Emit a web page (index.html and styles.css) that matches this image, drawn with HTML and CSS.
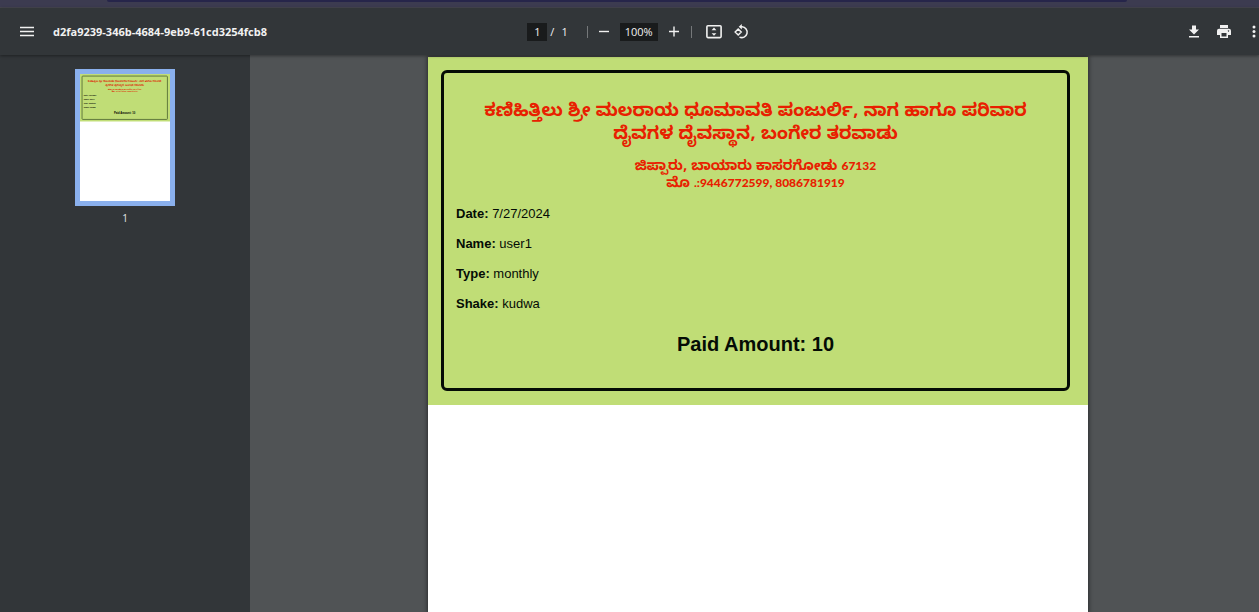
FILE: index.html
```html
<!DOCTYPE html>
<html lang="en">
<head>
<meta charset="utf-8">
<title>d2fa9239-346b-4684-9eb9-61cd3254fcb8</title>
<link rel="stylesheet" href="styles.css">
</head>
<body>
<div class="browser-edge"><div class="address-edge"></div></div>
<header class="toolbar">
  <div class="toolbar-start">
    <button class="icon-button" aria-label="Menu"><svg width="16" height="16" viewBox="0 0 16 16"><path d="M1 3.500h14M1 7.500h14M1 11.500h14" stroke="currentColor" stroke-width="1.600"/></svg></button>
    <span class="file-name">d2fa9239-346b-4684-9eb9-61cd3254fcb8</span>
  </div>
  <div class="toolbar-center">
    <div class="pager"><input class="field page-field" type="text" value="1" aria-label="Page number"><span>/</span><span>1</span></div>
    <span class="divider"></span>
    <div class="zoom">
      <button class="icon-button" aria-label="Zoom out"><svg width="16" height="16" viewBox="0 0 16 16"><path d="M3 7.500h10" stroke="currentColor" stroke-width="1.400"/></svg></button>
      <input class="field zoom-field" type="text" value="100%" aria-label="Zoom level">
      <button class="icon-button" aria-label="Zoom in"><svg width="16" height="16" viewBox="0 0 16 16"><path d="M3 7.500h10M8 2.500v10" stroke="currentColor" stroke-width="1.400"/></svg></button>
    </div>
    <span class="divider"></span>
    <div class="view-tools">
      <button class="icon-button" aria-label="Fit to page"><svg width="16" height="16" viewBox="0 0 16 16"><rect x="0.900" y="1.800" width="14.200" height="11.800" rx="1" fill="none" stroke="currentColor" stroke-width="1.600"/><path d="M8 3.600l2.400 2.600H5.600zM8 11.800l2.400-2.600H5.600z" fill="currentColor"/></svg></button>
      <button class="icon-button" aria-label="Rotate counterclockwise"><svg width="16" height="16" viewBox="0 0 16 16" fill="none" stroke="currentColor" stroke-width="1.500"><path d="M5.200 5l3 3-3 3-3-3zM7 2.800h2a5.400 5.400 0 1 1-2.500 10.300"/><path d="M8.800 0v5.600L5.700 2.800z" fill="currentColor" stroke="none"/></svg></button>
    </div>
  </div>
  <div class="toolbar-end">
    <button class="icon-button" aria-label="Download"><svg width="16" height="16" viewBox="0 0 16 16" fill="currentColor"><path d="M6 1.500h4v4h3l-5 5-5-5h3zM3 12h10v1.500H3z"/></svg></button>
    <button class="icon-button" aria-label="Print"><svg width="16" height="16" viewBox="0 0 16 16" fill="currentColor" fill-rule="evenodd"><path d="M4 1h8v3H4zM3 4.700h10a2 2 0 0 1 2 2v4.300h-3V14H4v-3H1V6.700a2 2 0 0 1 2-2zM5.500 9v3.500h5V9zM12.500 6.200a.7.7 0 1 0 .01 0z"/></svg></button>
    <button class="icon-button more" aria-label="More actions"><svg width="6" height="16" viewBox="0 0 6 16" fill="currentColor"><circle cx="3" cy="3" r="1.500"/><circle cx="3" cy="7.500" r="1.500"/><circle cx="3" cy="12" r="1.500"/></svg></button>
  </div>
</header>
<div class="viewer">
  <aside class="sidebar">
    <button class="thumbnail" aria-label="Page 1">
      <svg width="90" height="127" viewBox="0 0 660 931" font-family="Liberation Sans, sans-serif">
        <rect width="660" height="931" fill="#fff"/>
        <rect width="660" height="348" fill="#c0dd76"/>
        <rect x="15" y="15" width="626" height="318" rx="6" fill="none" stroke="#4c6430" stroke-width="6"/>
        <g fill="#dd2b08" font-family="Noto Sans Kannada, Noto Sans, sans-serif" font-weight="700" text-anchor="middle">
          <text x="327" y="60" font-size="18">ಕಣಿಹಿತ್ತಿಲು ಶ್ರೀ ಮಲರಾಯ ಧೂಮಾವತಿ ಪಂಜುರ್ಲಿ, ನಾಗ ಹಾಗೂ ಪರಿವಾರ</text>
          <text x="327" y="86" font-size="18">ದೈವಗಳ ದೈವಸ್ಥಾನ, ಬಂಗೇರ ತರವಾಡು</text>
          <text x="327" y="116" font-size="14">ಜಿಪ್ಪಾರು, ಬಾಯಾರು ಕಾಸರಗೋಡು 67132</text>
          <text x="327" y="135" font-size="13">ಮೊ .:9446772599, 8086781919</text>
        </g>
        <g font-size="13" font-weight="700">
          <text x="28" y="162">Date: 7/27/2024</text><text x="28" y="192">Name: user1</text><text x="28" y="222">Type: monthly</text><text x="28" y="252">Shake: kudwa</text>
          <text x="327" y="294" font-size="20" text-anchor="middle">Paid Amount: 10</text>
        </g>
      </svg>
    </button>
    <span class="thumbnail-number">1</span>
  </aside>
  <main class="canvas">
    <article class="page">
      <section class="receipt">
        <div class="receipt-frame">
          <h1 class="temple" lang="kn">ಕಣಿಹಿತ್ತಿಲು ಶ್ರೀ ಮಲರಾಯ ಧೂಮಾವತಿ ಪಂಜುರ್ಲಿ, ನಾಗ ಹಾಗೂ ಪರಿವಾರ<br>ದೈವಗಳ ದೈವಸ್ಥಾನ, ಬಂಗೇರ ತರವಾಡು</h1>
          <p class="address" lang="kn">ಜಿಪ್ಪಾರು, ಬಾಯಾರು ಕಾಸರಗೋಡು <span class="digits">67132</span><br>ಮೊ <span class="digits">.:9446772599, 8086781919</span></p>
          <p class="detail"><b>Date:</b> 7/27/2024</p>
          <p class="detail"><b>Name:</b> user1</p>
          <p class="detail"><b>Type:</b> monthly</p>
          <p class="detail"><b>Shake:</b> kudwa</p>
          <h2 class="amount">Paid Amount: 10</h2>
        </div>
      </section>
    </article>
  </main>
</div>
</body>
</html>
```
FILE: styles.css
```css
* { box-sizing: border-box; }
body {
  margin: 0;
  height: 100vh;
  display: flex;
  flex-direction: column;
  overflow: hidden;
  background: #505355;
  font-family: "Liberation Sans", sans-serif;
}
.browser-edge { height: 8px; flex: none; padding: 0 132px 0 107px; background: #3c3b50; border-bottom: 1px solid #45454f; }
.address-edge { height: 2px; background: #26254a; border-radius: 0 0 4px 4px; }
.toolbar {
  flex: none;
  height: 47px;
  padding: 0 2px 0 19px;
  display: grid;
  grid-template-columns: 1fr auto 1fr;
  align-items: center;
  background: #323639;
  color: #f1f1f1;
  font: 500 11px/16px "Open Sans", sans-serif;
  box-shadow: 0 1px 3px rgba(0, 0, 0, 0.4);
  position: relative;
}
.toolbar-start, .toolbar-center, .toolbar-end, .pager, .zoom, .view-tools { display: flex; align-items: center; }
.toolbar-start { gap: 18px; }
.toolbar-end { justify-content: flex-end; gap: 14px; }
.file-name { font-weight: 700; white-space: nowrap; }
.icon-button { display: flex; padding: 0; border: 0; background: none; color: inherit; }
.field { height: 18px; padding: 0; border: 0; background: #191b1c; color: inherit; font: inherit; text-align: center; }
.page-field { width: 20px; }
.zoom-field { width: 38px; }
.pager { gap: 3px; }
.pager span:last-child { margin-left: 4px; }
.divider { width: 1px; height: 12px; background: #75787a; }
.pager + .divider { margin: 0 8px 0 19px; }
.zoom { gap: 8px; }
.zoom + .divider { margin: 0 14px 0 9px; }
.view-tools { gap: 11px; }
.more { margin-left: 5px; }
.viewer { flex: 1; min-height: 0; display: flex; }
.sidebar { width: 250px; flex: none; padding-top: 14px; display: flex; flex-direction: column; align-items: center; background: #323639; }
.thumbnail { display: flex; padding: 5px; border: 0; background: #8ab0ed; }
.thumbnail-number { margin-top: 4px; color: #e6e6e6; font: 10px/16px "Open Sans", sans-serif; }
.canvas { flex: 1; padding: 2px 0 0 7px; display: flex; justify-content: center; }
.page { width: 660px; background: #fff; box-shadow: 0 0 4px 1px rgba(0, 0, 0, 0.45); }
.receipt { padding: 13px 18px 14px 13px; background: #c0dd76; }
.receipt-frame { padding: 29px 12px 32px; border: 3px solid #050c05; border-radius: 6px; color: #050c05; }
.temple, .address { margin: 0; color: #e82000; font-family: "Noto Sans Kannada", "Noto Sans", sans-serif; font-weight: 700; text-align: center; }
.temple { font-size: 18px; line-height: 23px; white-space: nowrap; }
.address { margin-top: 12px; font-size: 14px; line-height: 17px; }
.digits { font: 900 12px/12px Lato, sans-serif; }
.detail { margin: 0; font-size: 13px; line-height: 16px; }
.address + .detail { margin-top: 12px; }
.detail + .detail { margin-top: 14px; }
.amount { margin: 20px 0 0; font-size: 20px; line-height: 24px; text-align: center; }
```
